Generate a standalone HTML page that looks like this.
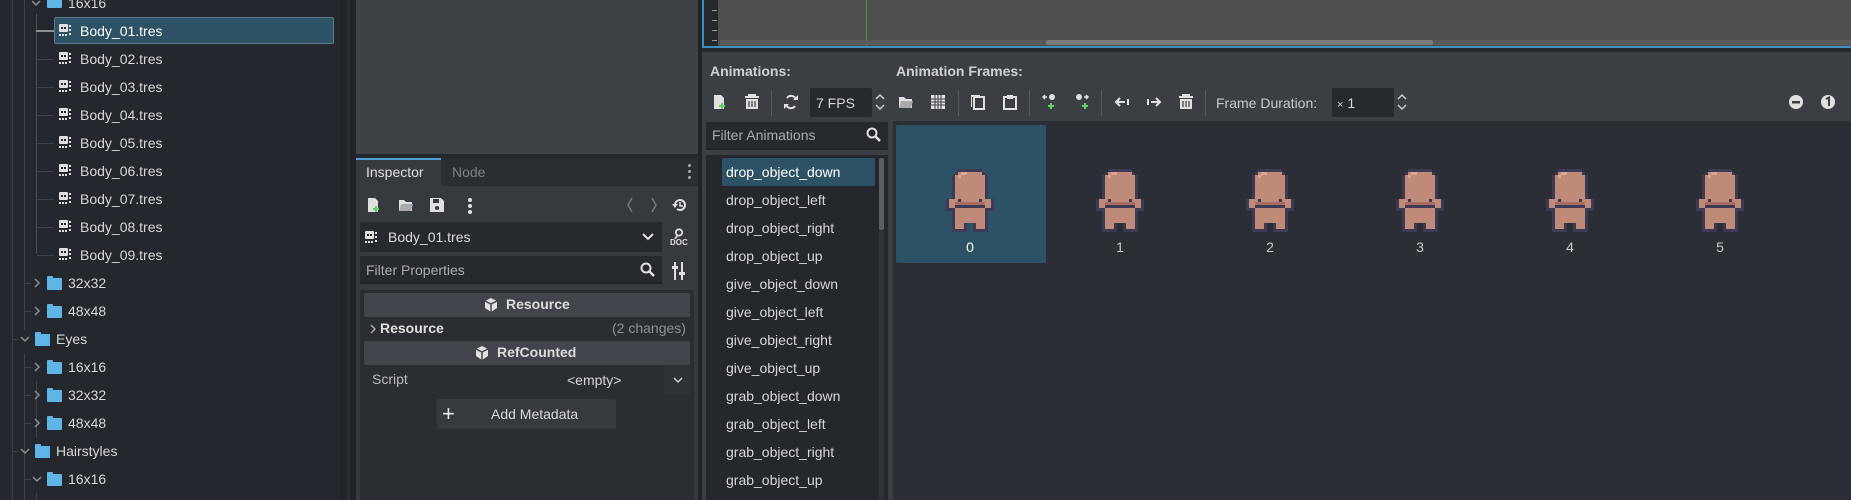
<!DOCTYPE html>
<html><head><meta charset="utf-8">
<style>
*{margin:0;padding:0;box-sizing:border-box}
body{width:1851px;height:500px;overflow:hidden;background:#24272d;font-family:"Liberation Sans","DejaVu Sans",sans-serif;font-size:14px;color:#d6d7d9;position:relative}
.a{position:absolute}
.t{position:absolute;white-space:nowrap;line-height:16px}
.vl{position:absolute;width:1px;background:#3d4147}
.hl{position:absolute;height:1px;background:#3d4147}
.fold{position:absolute;width:15px;height:12px;background:#5fb6e6;border-radius:1px}
.fold:before{content:"";position:absolute;left:0;top:-2px;width:6px;height:3px;background:#5fb6e6;border-radius:1px 1px 0 0}
.icon{position:absolute}
</style></head><body>

<div class="a" style="left:0;top:0;width:340px;height:500px;background:#24272d"></div>
<div class="vl" style="left:12px;top:0;height:500px"></div>
<div class="vl" style="left:24px;top:0;height:330px"></div>
<div class="vl" style="left:36px;top:14px;height:240px;background:#4a4e54"></div>
<div class="a" style="left:54px;top:17px;width:280px;height:27px;background:#2d5266;border:1px solid #5a7a8c;border-radius:2px"></div>
<div class="a" style="left:36px;top:30px;width:18px;height:2px;background:#8a8d91"></div>
<div class="fold" style="left:47px;top:-4px"></div>
<div class="t" style="left:68px;top:-5px">16x16</div>
<svg class="icon" style="left:31px;top:0px" width="10" height="8"><path d="M1 1l4 4 4-4" fill="none" stroke="#8a8d91" stroke-width="1.5"/></svg>

<svg class="icon" width="0" height="0" style="position:absolute"><defs>
<g id="sk"><rect x="0" y="0" width="9" height="8" rx="1" fill="#e0e0e0"/><rect x="2" y="3" width="2" height="2" fill="#24272d"/><rect x="5" y="3" width="2" height="2" fill="#24272d"/><rect x="0" y="10" width="2" height="2" fill="#e0e0e0"/><rect x="3" y="10" width="2" height="2" fill="#e0e0e0"/><rect x="6" y="10" width="2" height="2" fill="#e0e0e0"/><rect x="10" y="1" width="2" height="2" fill="#e0e0e0"/><rect x="10" y="5" width="2" height="2" fill="#e0e0e0"/><rect x="10" y="9" width="2" height="2" fill="#e0e0e0"/></g>
<g id="spr">
<g fill="#3d3a55"><rect x="4" y="0" width="8" height="1"/><rect x="3" y="1" width="10" height="1"/><rect x="2" y="2" width="12" height="8"/><rect x="0" y="10" width="16" height="4"/><rect x="2" y="14" width="12" height="4"/><rect x="2" y="18" width="5" height="3"/><rect x="9" y="18" width="5" height="3"/></g>
<g fill="#c08a78"><rect x="4" y="1" width="8" height="1"/><rect x="3" y="2" width="10" height="9"/><rect x="1" y="10" width="14" height="3"/><rect x="3" y="13" width="10" height="5"/><rect x="3" y="18" width="3" height="2"/><rect x="10" y="18" width="3" height="2"/></g>
<rect x="5" y="1" width="2" height="1" fill="#d9a88e"/><rect x="4" y="2" width="1" height="1" fill="#d9a88e"/>
<g fill="#3d3a55"><rect x="3" y="12" width="10" height="1"/><rect x="4" y="10" width="1" height="2"/><rect x="11" y="10" width="1" height="2"/><rect x="0" y="13" width="1" height="1"/><rect x="15" y="13" width="1" height="1"/></g>
<rect x="3" y="11" width="10" height="1" fill="#a86e64"/>
</g>
</defs></svg>

<div id="rows"></div>
<script>
var h='';
for(var i=1;i<=9;i++){var y=31+(i-1)*28;
 h+='<svg class="icon" style="left:59px;top:'+(y-7)+'px" width="13" height="13"><use href="#sk"/></svg>';
 h+='<div class="t" style="left:80px;top:'+(y-8)+'px;'+(i==1?'color:#fff':'')+'">Body_0'+i+'.tres</div>';
 if(i>1)h+='<div class="hl" style="left:37px;top:'+y+'px;width:16px"></div>';
}
var f=[[283,2,'32x32',0],[311,2,'48x48',0],[339,1,'Eyes',1],[367,2,'16x16',0],[395,2,'32x32',0],[423,2,'48x48',0],[451,1,'Hairstyles',1],[479,2,'16x16',1]];
f.forEach(function(r){var y=r[0],lv=r[1];var fx=lv==2?47:35,tx=lv==2?68:56,ax=lv==2?32:20;
 h+='<div class="fold" style="left:'+fx+'px;top:'+(y-5)+'px"></div>';
 h+='<div class="t" style="left:'+tx+'px;top:'+(y-8)+'px">'+r[2]+'</div>';
 if(r[3])h+='<svg class="icon" style="left:'+ax+'px;top:'+(y-3)+'px" width="10" height="8"><path d="M1 1l4 4 4-4" fill="none" stroke="#8a8d91" stroke-width="1.5"/></svg>';
 else h+='<svg class="icon" style="left:'+(ax+2)+'px;top:'+(y-5)+'px" width="8" height="10"><path d="M1 1l4 4-4 4" fill="none" stroke="#8a8d91" stroke-width="1.5"/></svg>';
 h+='<div class="hl" style="left:'+(lv==2?25:13)+'px;top:'+y+'px;width:6px"></div>';
});
var rows=['drop_object_down','drop_object_left','drop_object_right','drop_object_up','give_object_down','give_object_left','give_object_right','give_object_up','grab_object_down','grab_object_left','grab_object_right','grab_object_up'];
rows.forEach(function(r,i){var y=172+i*28;h+='<div class="t" style="left:726px;top:'+(y-8)+'px;'+(i==0?'color:#fff':'')+'">'+r+'</div>';});
for(var k=0;k<6;k++){var cx=970+k*150;
 h+='<svg class="icon" style="left:'+(cx-24)+'px;top:169px;shape-rendering:crispEdges" width="48" height="63" viewBox="0 0 16 21"><use href="#spr"/></svg>';
 h+='<div class="t" style="left:'+(cx-5)+'px;top:239px;width:10px;text-align:center;'+(k==0?'color:#fff':'color:#c8c9cb')+'">'+k+'</div>';}
document.getElementById('rows').innerHTML=h;
</script>
<div class="vl" style="left:24px;top:353px;height:147px"></div>
<div class="vl" style="left:36px;top:381px;height:56px"></div>
<div class="vl" style="left:36px;top:493px;height:7px"></div>

<div class="a" style="left:340px;top:0;width:16px;height:500px;background:#202328"></div>
<div class="a" style="left:347px;top:0;width:3px;height:500px;background:#2b2e33"></div>

<div class="a" style="left:356px;top:0;width:342px;height:154px;background:#3e4247"></div>

<div class="a" style="left:356px;top:158px;width:342px;height:342px;background:#363a3f"></div>
<div class="a" style="left:356px;top:158px;width:342px;height:28px;background:#2a2d32"></div>
<div class="a" style="left:356px;top:158px;width:85px;height:28px;background:#363a3f;border-top:2px solid #4e9fd0"></div>
<div class="t" style="left:366px;top:164px;color:#dfe0e1">Inspector</div>
<div class="t" style="left:452px;top:164px;color:#7d8085">Node</div>
<div class="a" style="left:688px;top:164px;width:3px;height:3px;background:#aaa;border-radius:50%;box-shadow:0 6px 0 #aaa,0 12px 0 #aaa"></div>
<svg class="icon" style="left:366px;top:197px" width="16" height="16"><path d="M2 1h7l3 3v11H2z" fill="#e0e0e0"/><path d="M9 9h2v2h2v2h-2v2H9v-2H7v-2h2z" fill="#5fd35f"/></svg>
<svg class="icon" style="left:398px;top:197px" width="16" height="16"><path d="M1 3h5l2 2h6v9H1z" fill="#e0e0e0"/><path d="M3 7h12l-2 7H1z" fill="#aaa"/></svg>
<svg class="icon" style="left:429px;top:197px" width="16" height="16"><path d="M1 1h11l3 3v11H1z" fill="#e0e0e0"/><rect x="4" y="2" width="6" height="4" fill="#363a3f"/><circle cx="8" cy="11" r="2" fill="#363a3f"/></svg>
<div class="a" style="left:468px;top:198px;width:4px;height:4px;background:#e0e0e0;border-radius:50%;box-shadow:0 6px 0 #e0e0e0,0 12px 0 #e0e0e0"></div>
<svg class="icon" style="left:626px;top:197px" width="8" height="16"><path d="M6 1L2 8l4 7" fill="none" stroke="#777" stroke-width="1.5"/></svg>
<svg class="icon" style="left:650px;top:197px" width="8" height="16"><path d="M2 1l4 7-4 7" fill="none" stroke="#777" stroke-width="1.5"/></svg>
<svg class="icon" style="left:672px;top:197px" width="16" height="16"><path d="M3 8a5 5 0 1 1 2 4" fill="none" stroke="#e0e0e0" stroke-width="2"/><path d="M0 7h6l-3 4z" fill="#e0e0e0"/><path d="M8 5v4h3" fill="none" stroke="#e0e0e0" stroke-width="1.5"/></svg>
<div class="a" style="left:360px;top:222px;width:302px;height:30px;background:#26292e;border-radius:2px"></div>
<svg class="icon" style="left:365px;top:231px" width="13" height="13"><use href="#sk"/></svg>
<div class="t" style="left:388px;top:229px;color:#dcdcdc">Body_01.tres</div>
<svg class="icon" style="left:642px;top:232px" width="12" height="10"><path d="M1 2l5 5 5-5" fill="none" stroke="#e0e0e0" stroke-width="2"/></svg>
<svg class="icon" style="left:672px;top:228px" width="14" height="11"><circle cx="7" cy="4.5" r="3.2" fill="none" stroke="#ddd" stroke-width="1.8"/><path d="M5 8l-2 3" stroke="#ddd" stroke-width="1.8"/></svg>
<div class="t" style="left:670px;top:238px;font-size:8px;line-height:9px;font-weight:bold;color:#ddd">DOC</div>
<div class="a" style="left:360px;top:256px;width:302px;height:28px;background:#26292e;border-bottom:2px solid #1f2226"></div>
<div class="t" style="left:366px;top:262px;color:#a9abae">Filter Properties</div>
<svg class="icon" style="left:640px;top:262px" width="16" height="16"><circle cx="6" cy="6" r="4.5" fill="none" stroke="#e0e0e0" stroke-width="2"/><path d="M9 9l5 5" stroke="#e0e0e0" stroke-width="2.5"/></svg>
<svg class="icon" style="left:672px;top:262px" width="14" height="18"><path d="M3 0v18M10 0v18" stroke="#e0e0e0" stroke-width="2"/><rect x="0" y="4" width="6" height="3" fill="#e0e0e0"/><rect x="7" y="10" width="6" height="3" fill="#e0e0e0"/></svg>
<div class="a" style="left:360px;top:290px;width:334px;height:210px;background:#2a2d32"></div>
<div class="a" style="left:364px;top:293px;width:326px;height:24px;background:#41454b;border-radius:2px"></div>
<svg class="icon" style="left:484px;top:298px" width="14" height="14"><path d="M7 0l6 3v7l-6 4-6-4V3z" fill="#e0e0e0"/><path d="M1 3l6 3 6-3M7 6v8" fill="none" stroke="#41454b" stroke-width="1.5"/></svg>
<div class="t" style="left:506px;top:296px;font-weight:bold;color:#dcdcdc">Resource</div>
<svg class="icon" style="left:369px;top:324px" width="8" height="10"><path d="M2 1l4 4-4 4" fill="none" stroke="#aaa" stroke-width="1.5"/></svg>
<div class="t" style="left:380px;top:320px;font-weight:bold;color:#e0e0e0">Resource</div>
<div class="t" style="left:612px;top:320px;color:#8d9094">(2 changes)</div>
<div class="a" style="left:364px;top:341px;width:326px;height:24px;background:#41454b;border-radius:2px"></div>
<svg class="icon" style="left:475px;top:346px" width="14" height="14"><path d="M7 0l6 3v7l-6 4-6-4V3z" fill="#e0e0e0"/><path d="M1 3l6 3 6-3M7 6v8" fill="none" stroke="#41454b" stroke-width="1.5"/></svg>
<div class="t" style="left:497px;top:344px;font-weight:bold;color:#dcdcdc">RefCounted</div>
<div class="t" style="left:372px;top:371px;color:#b9bbbd">Script</div>
<div class="t" style="left:567px;top:372px;color:#d6d7d9">&lt;empty&gt;</div>
<div class="a" style="left:664px;top:365px;width:26px;height:30px;background:#2e3136"></div>
<svg class="icon" style="left:673px;top:377px" width="10" height="8"><path d="M1 1l4 4 4-4" fill="none" stroke="#ccc" stroke-width="1.5"/></svg>
<div class="a" style="left:437px;top:399px;width:179px;height:30px;background:#363a3f;border-radius:2px"></div>
<div class="t" style="left:442px;top:403px;font-size:22px;color:#e8e8e8;line-height:22px">+</div>
<div class="t" style="left:491px;top:406px;color:#d6d7d9">Add Metadata</div>

<div class="a" style="left:698px;top:0;width:7px;height:500px;background:#202328"></div>

<div class="a" style="left:702px;top:0;width:1149px;height:48px;background:#4f4f4f;border-left:2px solid #3d8fbf;border-bottom:2px solid #3d8fbf"></div>
<div class="a" style="left:704px;top:0;width:14px;height:46px;background:#25282d"></div>
<div class="a" style="left:712px;top:10px;width:5px;height:1px;background:#999;box-shadow:0 10px 0 #999,0 20px 0 #999,0 30px 0 #999"></div>
<div class="a" style="left:866px;top:0;width:1px;height:46px;background:#5a8a5a"></div>
<div class="a" style="left:720px;top:40px;width:1131px;height:5px;background:#5a5a5a"></div>
<div class="a" style="left:1046px;top:40px;width:387px;height:5px;background:#7a7a7a;border-radius:2px"></div>
<div class="a" style="left:702px;top:48px;width:1149px;height:4px;background:#26292d"></div>

<div class="a" style="left:702px;top:52px;width:1149px;height:448px;background:#3b3f44"></div>
<div class="t" style="left:710px;top:63px;font-weight:bold;color:#d0d1d3">Animations:</div>
<div class="t" style="left:896px;top:63px;font-weight:bold;color:#d0d1d3">Animation Frames:</div>
<svg class="icon" style="left:712px;top:94px" width="16" height="16"><path d="M2 1h7l3 3v11H2z" fill="#e0e0e0"/><path d="M9 9h2v2h2v2h-2v2H9v-2H7v-2h2z" fill="#5fd35f"/></svg>
<svg class="icon" style="left:744px;top:94px" width="16" height="16"><path d="M1 3h14M5 3V1h6v2" stroke="#e0e0e0" stroke-width="2" fill="none"/><path d="M2 5h12v10H2z" fill="#e0e0e0"/><path d="M5 7v6M8 7v6M11 7v6" stroke="#3b3f44" stroke-width="1.2"/></svg>
<div class="a" style="left:771px;top:90px;width:1px;height:26px;background:#55595e"></div>
<svg class="icon" style="left:783px;top:94px" width="16" height="16"><path d="M13 6a5 5 0 0 0-9-2M3 10a5 5 0 0 0 9 2" fill="none" stroke="#e0e0e0" stroke-width="2"/><path d="M10 6h5V1zM6 10H1v5z" fill="#e0e0e0"/></svg>
<div class="a" style="left:810px;top:88px;width:62px;height:29px;background:#26292e;border-radius:2px"></div>
<div class="t" style="left:816px;top:95px;color:#d6d7d9">7 FPS</div>
<svg class="icon" style="left:874px;top:93px" width="12" height="18"><path d="M2 6l4-4 4 4M2 12l4 4 4-4" fill="none" stroke="#ccc" stroke-width="1.5"/></svg>
<svg class="icon" style="left:898px;top:94px" width="16" height="16"><path d="M1 3h5l2 2h6v9H1z" fill="#e0e0e0"/><path d="M3 7h12l-2 7H1z" fill="#aaa"/></svg>
<svg class="icon" style="left:930px;top:94px" width="16" height="16"><rect x="1" y="1" width="14" height="14" fill="#e0e0e0"/><path d="M5 1v14M8 1v14M11 1v14M1 5h14M1 8h14M1 11h14" stroke="#3b3f44" stroke-width="1"/></svg>
<div class="a" style="left:958px;top:90px;width:1px;height:26px;background:#55595e"></div>
<svg class="icon" style="left:970px;top:94px" width="16" height="16"><path d="M4 3h10v12H4z" fill="none" stroke="#e0e0e0" stroke-width="2"/><path d="M1 1h9v2H2v10H1z" fill="#e0e0e0"/></svg>
<svg class="icon" style="left:1002px;top:94px" width="16" height="16"><path d="M2 3h12v12H2z" fill="none" stroke="#e0e0e0" stroke-width="2"/><rect x="5" y="1" width="6" height="4" fill="#e0e0e0"/></svg>
<div class="a" style="left:1029px;top:90px;width:1px;height:26px;background:#55595e"></div>
<svg class="icon" style="left:1042px;top:93px" width="16" height="18"><circle cx="10" cy="4" r="3" fill="#e0e0e0"/><path d="M1 4h4M3 2l-2 2 2 2" stroke="#e0e0e0" stroke-width="1.5" fill="none"/><path d="M9 10v6M6 13h6" stroke="#5fd35f" stroke-width="2"/></svg>
<svg class="icon" style="left:1074px;top:93px" width="16" height="18"><circle cx="5" cy="4" r="3" fill="#e0e0e0"/><path d="M10 4h4M12 2l2 2-2 2" stroke="#e0e0e0" stroke-width="1.5" fill="none"/><path d="M11 10v6M8 13h6" stroke="#5fd35f" stroke-width="2"/></svg>
<div class="a" style="left:1101px;top:90px;width:1px;height:26px;background:#55595e"></div>
<svg class="icon" style="left:1114px;top:94px" width="16" height="16"><path d="M2 8h9M6 4L2 8l4 4" stroke="#e0e0e0" stroke-width="2" fill="none"/><path d="M14 5v6" stroke="#e0e0e0" stroke-width="2"/></svg>
<svg class="icon" style="left:1146px;top:94px" width="16" height="16"><path d="M5 8h9M10 4l4 4-4 4" stroke="#e0e0e0" stroke-width="2" fill="none"/><path d="M2 5v6" stroke="#e0e0e0" stroke-width="2"/></svg>
<svg class="icon" style="left:1178px;top:94px" width="16" height="16"><path d="M1 3h14M5 3V1h6v2" stroke="#e0e0e0" stroke-width="2" fill="none"/><path d="M2 5h12v10H2z" fill="#e0e0e0"/><path d="M5 7v6M8 7v6M11 7v6" stroke="#3b3f44" stroke-width="1.2"/></svg>
<div class="a" style="left:1205px;top:90px;width:1px;height:26px;background:#55595e"></div>
<div class="t" style="left:1216px;top:95px;color:#c8c9cb">Frame Duration:</div>
<div class="a" style="left:1332px;top:88px;width:62px;height:29px;background:#26292e;border-radius:2px"></div>
<div class="t" style="left:1337px;top:95px;color:#d6d7d9"><span style="font-size:11px">×</span> 1</div>
<svg class="icon" style="left:1396px;top:93px" width="12" height="18"><path d="M2 6l4-4 4 4M2 12l4 4 4-4" fill="none" stroke="#ccc" stroke-width="1.5"/></svg>
<svg class="icon" style="left:1788px;top:94px" width="16" height="16"><circle cx="8" cy="8" r="7" fill="#e0e0e0"/><rect x="4" y="7" width="8" height="2.5" fill="#3b3f44"/></svg>
<svg class="icon" style="left:1820px;top:94px" width="16" height="16"><circle cx="8" cy="8" r="7" fill="#e0e0e0"/><path d="M6 5l3-1.5V12" stroke="#3b3f44" stroke-width="2" fill="none"/></svg>

<div class="a" style="left:706px;top:122px;width:182px;height:28px;background:#26292e;border-bottom:2px solid #1f2226"></div>
<div class="t" style="left:712px;top:127px;color:#a9abae">Filter Animations</div>
<svg class="icon" style="left:866px;top:127px" width="16" height="16"><circle cx="6" cy="6" r="4.5" fill="none" stroke="#e0e0e0" stroke-width="2"/><path d="M9 9l5 5" stroke="#e0e0e0" stroke-width="2.5"/></svg>
<div class="a" style="left:706px;top:155px;width:182px;height:345px;background:#24272c"></div>
<div class="a" style="left:722px;top:158px;width:153px;height:28px;background:#2d5266;border-radius:2px"></div>
<div class="a" style="left:879px;top:158px;width:5px;height:72px;background:#5b5f64;border-radius:2px"></div>
<div class="a" style="left:879px;top:230px;width:5px;height:270px;background:#2f3237;border-radius:2px"></div>
<div class="a" style="left:893px;top:121px;width:958px;height:379px;background:#2b2e34"></div>
<div class="a" style="left:896px;top:125px;width:150px;height:138px;background:#2d5266;border-radius:2px"></div>

<script>document.body.appendChild(document.getElementById('rows'));</script>
</body></html>
